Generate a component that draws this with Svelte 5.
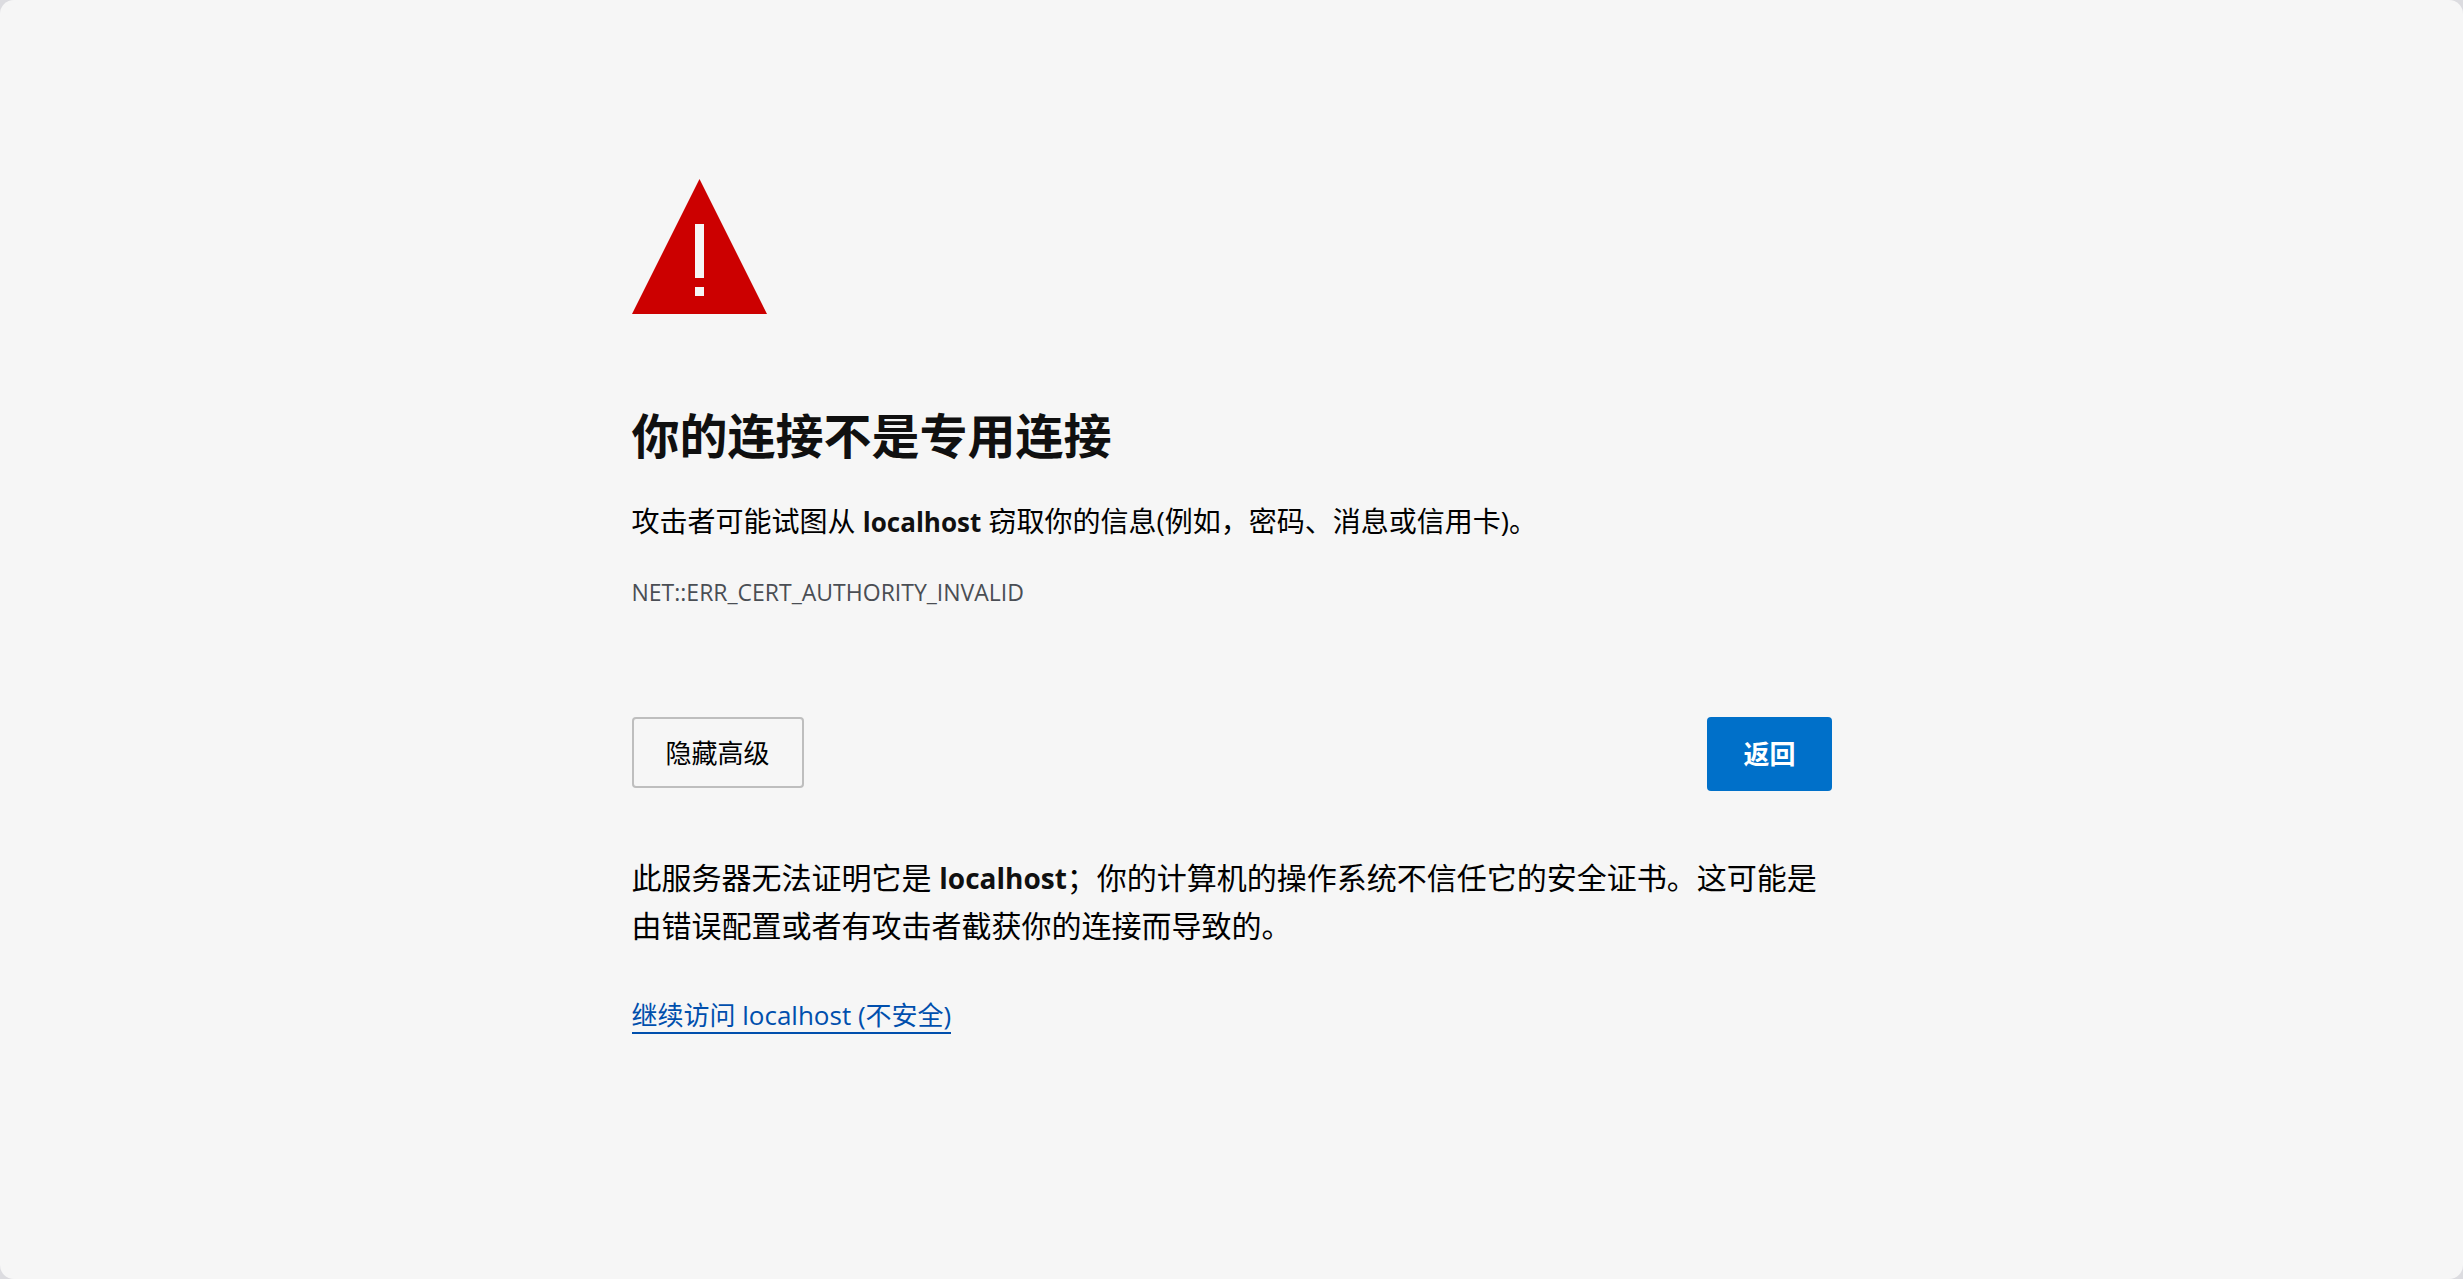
<script>
  const host = 'localhost';
  let showDetails = $state(true);
</script>

<div class="page" lang="zh-CN">
  <main>
    <svg class="warning" viewBox="0 0 15 15" aria-hidden="true">
      <path fill="#cc0000" fill-rule="evenodd" d="M7.5 0 15 15H0ZM7 5V11H8V5ZM7 12V13H8V12Z" />
    </svg>

    <h1>你的连接不是专用连接</h1>
    <p class="summary">攻击者可能试图从 <strong>{host}</strong> 窃取你的信息(例如，密码、消息或信用卡)。</p>
    <p class="code">NET::ERR_CERT_AUTHORITY_INVALID</p>

    <div class="actions">
      <button
        class="secondary"
        type="button"
        aria-expanded={showDetails}
        onclick={() => (showDetails = !showDetails)}>{showDetails ? '隐藏高级' : '高级'}</button>
      <button class="primary" type="button" onclick={() => history.back()}>返回</button>
    </div>

    {#if showDetails}
      <section>
        <p class="details">此服务器无法证明它是 <strong>{host}</strong>；你的计算机的操作系统不信任它的安全证书。这可能是由错误配置或者有攻击者截获你的连接而导致的。</p>
        <a href="#proceed">继续访问 {host} (不安全)</a>
      </section>
    {/if}
  </main>
</div>

<style>
  :global(body) {
    margin: 0;
    background: #dcdce0;
  }

  .page {
    box-sizing: border-box;
    min-height: 100vh;
    padding: 179px 32px 64px;
    border-radius: 14px;
    background: #f6f6f6;
    color: #000;
    font-family: 'Open Sans', 'Noto Sans CJK SC', sans-serif;
  }

  main {
    max-width: 1200px;
    margin: 0 auto;
  }

  .warning {
    display: block;
    width: 135px;
    height: 135px;
  }

  h1 {
    margin: 90px 0 0;
    color: #101010;
    font-size: 48px;
    font-weight: 700;
    line-height: 64px;
  }

  p {
    margin: 0;
  }

  strong {
    color: #101010;
    font-weight: 700;
  }

  .summary {
    margin-top: 31px;
    font-size: 28px;
    line-height: 44px;
  }

  .summary strong {
    font-size: 26px;
  }

  .code {
    margin-top: 32px;
    color: #4a4e54;
    font-size: 23px;
    line-height: 32px;
  }

  .actions {
    display: flex;
    align-items: flex-start;
    justify-content: space-between;
    margin-top: 109px;
  }

  button {
    border-radius: 4px;
    font-family: inherit;
    font-size: 26px;
    cursor: pointer;
  }

  .secondary {
    padding: 16px 32px 15px;
    border: 2px solid #bebebe;
    background: transparent;
    color: #000;
    line-height: 36px;
  }

  .primary {
    padding: 19px 36px;
    border: 0;
    background: #0070c9;
    color: #fff;
    font-weight: 700;
    line-height: 36px;
  }

  .details {
    margin: 63px 0 48px;
    font-size: 30px;
    line-height: 48px;
  }

  .details strong {
    font-size: 28px;
  }

  a {
    display: inline-block;
    border-bottom: 2px solid #004fad;
    color: #004fad;
    font-size: 26px;
    line-height: 34px;
    text-decoration: none;
  }
</style>
